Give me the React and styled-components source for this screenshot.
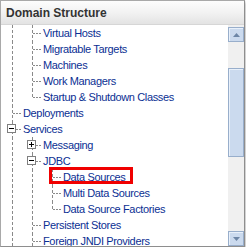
import React from "react";
import styled, { createGlobalStyle, css } from "styled-components";

const Global = createGlobalStyle`
  html, body { margin: 0; padding: 0; background: #ffffff; }
  body { font-family: "Liberation Sans", Arial, sans-serif; }
`;

const Panel = styled.div`
  width: 243px;
  height: 245px;
  border: 1px solid #a9a9a9;
  border-right-color: #8e8e8e;
  border-bottom-color: #8e8e8e;
  box-shadow: 1px 2px 3px rgba(0, 0, 0, 0.28);
  display: flex;
  flex-direction: column;
  background: #fff;
  overflow: hidden;
`;

const Header = styled.div`
  height: 23px;
  flex-shrink: 0;
  border-bottom: 1px solid #d6d6d6;
  background: linear-gradient(to bottom, #fdfdfd 0%, #f1f1f1 55%, #e3e3e3 100%);
  display: flex;
  align-items: center;
  padding-left: 5px;
  font-family: "Liberation Sans", Arial, sans-serif;
  font-weight: bold;
  font-size: 12px;
  color: #333333;
`;

const Body = styled.div`
  flex: 1;
  display: flex;
  min-height: 0;
`;

const Tree = styled.div`
  flex: 1;
  overflow: hidden;
  padding-left: 1px;
  display: flex;
  flex-direction: column;
`;

const Row = styled.div`
  height: 16px;
  display: flex;
  align-items: center;
  flex-shrink: 0;
  position: relative;
`;

const vDash = "repeating-linear-gradient(to bottom, #8a8a8a 0 3px, transparent 3px 5px)";
const hDash = "repeating-linear-gradient(to right, #8a8a8a 0 2px, transparent 2px 3px)";

const Cell = styled.span`
  width: 20px;
  height: 16px;
  flex-shrink: 0;
  position: relative;

  ${({ $kind }) =>
    $kind !== "blank" &&
    css`
      &::before {
        content: "";
        position: absolute;
        left: 10px;
        top: 0;
        width: 1px;
        height: ${$kind === "last" ? "8px" : "16px"};
        background: ${vDash};
      }
    `}

  ${({ $kind }) =>
    ($kind === "tee" || $kind === "last") &&
    css`
      &::after {
        content: "";
        position: absolute;
        left: 11px;
        top: 8px;
        width: 9px;
        height: 1px;
        background: ${hDash};
      }
    `}
`;

const Expander = styled.span`
  position: absolute;
  left: 5px;
  top: 3px;
  width: 9px;
  height: 9px;
  box-sizing: border-box;
  border: 1px solid #7f7f7f;
  background: #fff;
  z-index: 1;

  &::before {
    content: "";
    position: absolute;
    left: 1px;
    top: 3px;
    width: 5px;
    height: 1px;
    background: #000;
  }

  ${({ $open }) =>
    !$open &&
    css`
      &::after {
        content: "";
        position: absolute;
        left: 3px;
        top: 1px;
        width: 1px;
        height: 5px;
        background: #000;
      }
    `}
`;

const Label = styled.span`
  margin-left: 1px;
  font-family: "Liberation Sans", Arial, sans-serif;
  font-size: 11px;
  letter-spacing: -0.35px;
  line-height: 16px;
  color: #0b2f93;
  white-space: nowrap;
`;

const Highlight = styled.span`
  position: absolute;
  left: ${({ $left }) => $left}px;
  top: -2px;
  width: ${({ $width }) => $width}px;
  height: 17px;
  box-sizing: border-box;
  border: 3px solid #f00000;
  pointer-events: none;
`;

const Scrollbar = styled.div`
  width: 16px;
  flex-shrink: 0;
  background: #f0f0f0;
  display: flex;
  flex-direction: column;
  padding-top: 2px;
`;

const blueBox = css`
  box-sizing: border-box;
  background: #cbdaee;
  border: 1px solid #98aecb;
  box-shadow: inset 1px 1px 0 #e8f0fa;
`;

const ArrowButton = styled.div`
  ${blueBox};
  height: 15px;
  flex-shrink: 0;
  display: flex;
  align-items: center;
  justify-content: center;
`;

const Track = styled.div`
  flex: 1;
  display: flex;
  flex-direction: column;
  padding-top: 26px;
  padding-bottom: 74px;
`;

const Thumb = styled.div`
  ${blueBox};
  flex: 1;
`;

const Arrow = ({ dir }) => (
  <svg width="7" height="4" viewBox="0 0 7 4">
    {dir === "up" ? (
      <path d="M0 4 L3.5 0 L7 4 Z" fill="#6d86a6" />
    ) : (
      <path d="M0 0 L7 0 L3.5 4 Z" fill="#6d86a6" />
    )}
  </svg>
);

const rows = [
  { cells: ["line", "tee"], label: "Virtual Hosts" },
  { cells: ["line", "tee"], label: "Migratable Targets" },
  { cells: ["line", "tee"], label: "Machines" },
  { cells: ["line", "tee"], label: "Work Managers" },
  { cells: ["line", "last"], label: "Startup & Shutdown Classes" },
  { cells: ["tee"], label: "Deployments" },
  { cells: ["tee"], label: "Services", box: "open" },
  { cells: ["line", "tee"], label: "Messaging", box: "closed" },
  { cells: ["line", "tee"], label: "JDBC", box: "open" },
  { cells: ["line", "line", "tee"], label: "Data Sources", highlight: true },
  { cells: ["line", "line", "tee"], label: "Multi Data Sources" },
  { cells: ["line", "line", "last"], label: "Data Source Factories" },
  { cells: ["line", "tee"], label: "Persistent Stores" },
  { cells: ["line", "tee"], label: "Foreign JNDI Providers" },
];

export default function App() {
  return (
    <>
      <Global />
      <Panel>
        <Header>Domain Structure</Header>
        <Body>
          <Tree>
            {rows.map((r, i) => (
              <Row key={i}>
                {r.cells.map((k, j) => (
                  <Cell key={j} $kind={k}>
                    {r.box && j === r.cells.length - 1 && (
                      <Expander $open={r.box === "open"} />
                    )}
                  </Cell>
                ))}
                <Label>{r.label}</Label>
                {r.highlight && <Highlight $left={47} $width={84} />}
              </Row>
            ))}
          </Tree>
          <Scrollbar>
            <ArrowButton>
              <Arrow dir="up" />
            </ArrowButton>
            <Track>
              <Thumb />
            </Track>
            <ArrowButton>
              <Arrow dir="down" />
            </ArrowButton>
          </Scrollbar>
        </Body>
      </Panel>
    </>
  );
}
